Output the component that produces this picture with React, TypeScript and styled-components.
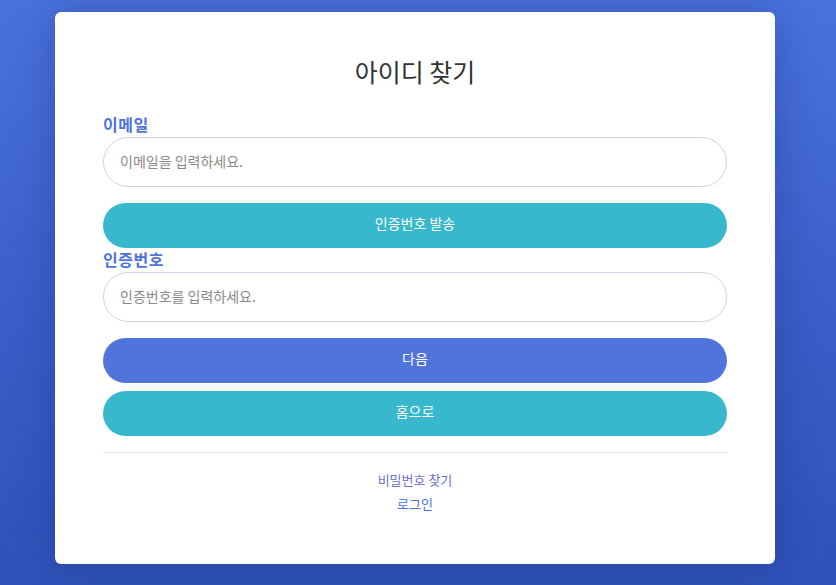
import React from "react";
import styled, { createGlobalStyle } from "styled-components";

const Global = createGlobalStyle`
  html, body { margin: 0; padding: 0; height: 100%; }
  body {
    font-family: "Noto Sans CJK KR", "Noto Sans", sans-serif;
    background: linear-gradient(180deg, #4a72de 0%, #3b5fcb 50%, #2f51b8 100%);
  }
  * { box-sizing: border-box; }
`;

const Page = styled.div`
  min-height: 585px;
  display: flex;
  justify-content: center;
  padding: 12px 6px 0 0;
`;

const Card = styled.div`
  width: 720px;
  height: 552px;
  background: #ffffff;
  border-radius: 6px;
  padding: 48px 48px;
  box-shadow: 0 0 40px rgba(20, 40, 110, 0.35);
  display: flex;
  flex-direction: column;
`;

const Title = styled.h1`
  margin: -1px 0 32px;
  font-size: 25px;
  line-height: 24px;
  font-weight: 400;
  color: #333333;
  text-align: center;
`;

const Label = styled.label`
  display: block;
  font-size: 16px;
  line-height: 18px;
  font-weight: 700;
  letter-spacing: 0.5px;
  color: #4f72de;
  margin-bottom: 4px;
`;

const Input = styled.input`
  width: 100%;
  height: 50px;
  border: 1px solid #d2d0e2;
  border-radius: 25px;
  padding: 0 16px 3px;
  font-family: inherit;
  font-size: 14px;
  color: #333;
  outline: none;
  margin-bottom: 16px;
  &::placeholder { color: #8a8a8a; }
`;

const Button = styled.button<{ $tone: "teal" | "blue"; $mb: number }>`
  width: 100%;
  height: 45px;
  border: none;
  border-radius: 23px;
  padding: 0 0 6px;
  background: ${(p) => (p.$tone === "teal" ? "#37b8cd" : "#4f75dd")};
  color: #ffffff;
  font-family: inherit;
  font-size: 14px;
  margin-bottom: ${(p) => p.$mb}px;
  cursor: pointer;
`;

const Divider = styled.hr`
  border: none;
  border-top: 1px solid #e3e3e3;
  margin: 0 0 15px;
`;

const Links = styled.div`
  display: flex;
  flex-direction: column;
  align-items: center;
`;

const LinkText = styled.a<{ $color: string }>`
  font-size: 13px;
  line-height: 24px;
  color: ${(p) => p.$color};
  text-decoration: none;
`;

export default function App() {
  return (
    <>
      <Global />
      <Page>
        <Card>
          <Title>아이디 찾기</Title>
          <Label>이메일</Label>
          <Input placeholder="이메일을 입력하세요." />
          <Button $tone="teal" $mb={2}>인증번호 발송</Button>
          <Label>인증번호</Label>
          <Input placeholder="인증번호를 입력하세요." />
          <Button $tone="blue" $mb={8}>다음</Button>
          <Button $tone="teal" $mb={16}>홈으로</Button>
          <Divider />
          <Links>
            <LinkText href="#" $color="#6d6fd8">비밀번호 찾기</LinkText>
            <LinkText href="#" $color="#4a70e0">로그인</LinkText>
          </Links>
        </Card>
      </Page>
    </>
  );
}
